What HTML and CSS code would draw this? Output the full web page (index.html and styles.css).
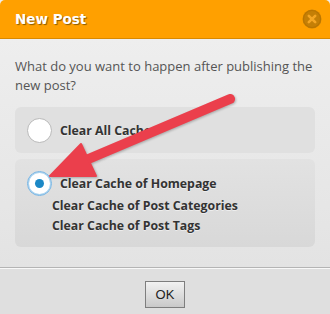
FILE: index.html
```html
<!DOCTYPE html>
<html>
<head>
	<meta charset="UTF-8">
	<title>New Post</title>
	<link rel="stylesheet" href="styles.css">
</head>
<body>
	<div class="dialog">
		<div class="titlebar">
			<span class="title">New Post</span>
			<span class="close">
				<svg width="20" height="20" viewBox="0 0 20 20">
					<circle cx="10" cy="10" r="9.5" fill="#c47f06"/>
					<circle cx="10" cy="10" r="8.5" fill="none" stroke="#b87400" stroke-width="1"/>
					<path d="M6.8 6.8 L13.2 13.2 M13.2 6.8 L6.8 13.2" stroke="#f5a623" stroke-width="2.6" stroke-linecap="round"/>
				</svg>
			</span>
		</div>
		<div class="content">
			<p class="question">What do you want to happen after publishing the new post?</p>
			<div class="option">
				<div class="row">
					<span class="radio"></span>
					<span class="label">Clear All Cache</span>
				</div>
			</div>
			<div class="option option-big">
				<div class="row">
					<span class="radio checked"><span class="dot"></span></span>
					<span class="label">Clear Cache of Homepage</span>
				</div>
				<div class="sub">Clear Cache of Post Categories</div>
				<div class="sub">Clear Cache of Post Tags</div>
			</div>
		</div>
		<div class="footer">
			<button class="ok">OK</button>
		</div>
		<!-- annotation arrow drawn over the dialog -->
		<svg class="arrow" width="330" height="314" viewBox="0 0 330 314">
			<g fill="#eb3f4c" stroke="#eb3f4c">
				<line x1="230" y1="99" x2="86" y2="160" stroke-width="10" stroke-linecap="round"/>
				<polygon points="50,176 81,144 96,176" stroke-width="2" stroke-linejoin="round"/>
			</g>
		</svg>
	</div>
</body>
</html>
```

FILE: styles.css
```css
body {
	margin : 0;
	background-color : #eeeeee;
	font-family : "Open Sans", "Noto Sans", sans-serif;
}

.dialog {
	position : relative;
	width : 330px;
	height : 314px;
	display : flex;
	flex-direction : column;
	overflow : hidden;
	border-radius : 5px 5px 0 0;
}

.titlebar {
	height : 38px;
	background-color : #ffa000;
	border-bottom : 1px solid #d98900;
	display : flex;
	align-items : center;
	justify-content : space-between;
	padding : 0 8px 0 15px;
}
.title {
	color : white;
	font-family : "DejaVu Sans", sans-serif;
	font-weight : bold;
	font-size : 13.5px;
	text-shadow : 1px 1px 1px #8a5a00;
}
.close {
	display : flex;
	width : 20px;
	height : 20px;
}

.content {
	padding : 18px 15px 20px 15px;
	background : linear-gradient(#eeeeee, #e3e3e3);
	border-bottom : 1px solid #b4b4b4;
}
.question {
	margin : 0 0 12px 0;
	font-size : 13px;
	line-height : 19px;
	color : #555555;
}

.option {
	background-color : #e0e0e0;
	border-radius : 6px;
	padding : 10px 12px;
	margin-bottom : 6px;
}
.option-big {
	background : linear-gradient(#e2e2e2, #d8d8d8);
	padding : 11px 12px 11px 12px;
	margin-bottom : 0;
}
.row {
	display : flex;
	align-items : center;
	gap : 8px;
	height : 26px;
}
.radio {
	width : 23px;
	height : 23px;
	border : 1px solid #b9b9b9;
	border-radius : 50%;
	background-color : white;
	display : flex;
	align-items : center;
	justify-content : center;
	box-sizing : content-box;
}
.radio.checked {
	border-color : #74b3e2;
	box-shadow : 0 0 0 1px #a9d2ef inset;
}
.dot {
	width : 9px;
	height : 9px;
	border-radius : 50%;
	background-color : #1b88c6;
}
.label, .sub {
	font-size : 12.3px;
	font-weight : bold;
	color : #333333;
	text-shadow : 0 1px 0 rgba(255,255,255,0.5);
}
.sub {
	padding-left : 25px;
	line-height : 20px;
}

.footer {
	flex : 1;
	background-color : #dfdfdf;
	border-top : 1px solid #f8f8f8;
	display : flex;
	justify-content : center;
	padding-top : 12px;
}
.ok {
	width : 40px;
	height : 27px;
	border : 1px solid #7e7e7e;
	background : linear-gradient(#f2f2f2, #c9c9c9);
	font-family : "Liberation Sans", sans-serif;
	font-size : 13px;
	color : #222222;
	padding : 0;
}

.arrow {
	position : absolute;
	left : 0;
	top : 0;
	filter : drop-shadow(1px 1px 1px rgba(0,0,0,0.25));
}
```
